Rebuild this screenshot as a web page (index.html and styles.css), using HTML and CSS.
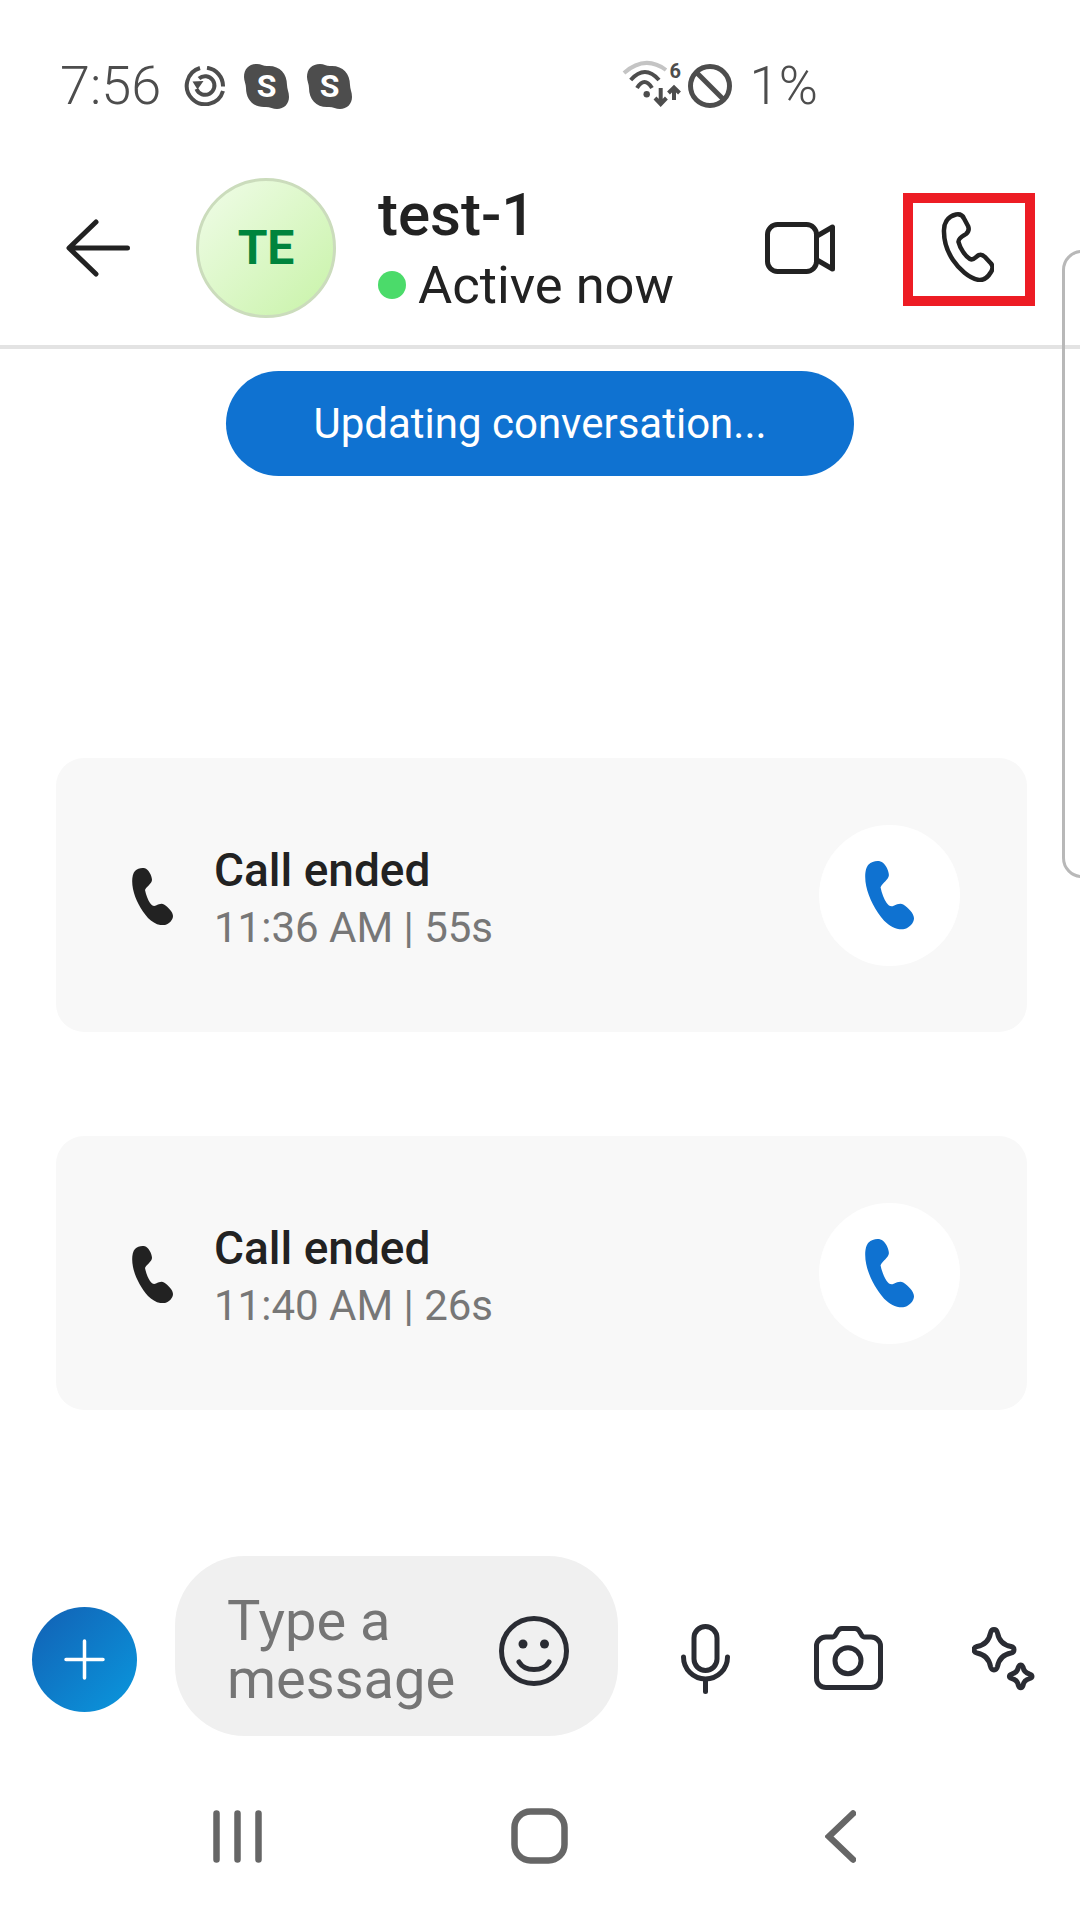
FILE: index.html
```html
<!DOCTYPE html>
<html lang="en">
<head>
<meta charset="utf-8">
<title>test-1</title>
<link rel="stylesheet" href="styles.css">
</head>
<body>
<div class="screen">
  <div class="status">
    <div class="status-group">
      <span class="time">7:56</span>
      <svg class="sync" viewBox="0 0 41 40" fill="none" stroke="#4d4d4d" stroke-width="4">
        <path d="M39 25 A18.500 18.500 0 1 1 16 2"/>
        <path d="M23 1.800 A18.500 18.500 0 0 1 39 20.500"/>
        <path d="M15 12.500 A9.300 9.300 0 1 1 12.500 23"/>
        <path d="M8.500 15.500 L19.500 15 L13.500 23.500 Z" fill="#4d4d4d" stroke="none"/>
      </svg>
      <span class="skype">
        <svg class="skype-blob" viewBox="0 0 45 45"><path d="M13 0 C17 0 19 2 23 2 C35 1 43 9 43 21 C43 25 45 28 45 33 C45 40 40 45 33 45 C29 45 26 43 22 43 C10 44 2 36 2 24 C2 20 0 17 0 13 C0 5 5 0 13 0 Z"/></svg>
        <span class="skype-s">S</span>
      </span>
      <span class="skype second">
        <svg class="skype-blob" viewBox="0 0 45 45"><path d="M13 0 C17 0 19 2 23 2 C35 1 43 9 43 21 C43 25 45 28 45 33 C45 40 40 45 33 45 C29 45 26 43 22 43 C10 44 2 36 2 24 C2 20 0 17 0 13 C0 5 5 0 13 0 Z"/></svg>
        <span class="skype-s">S</span>
      </span>
    </div>
    <div class="status-group right">
      <span class="wifi-wrap">
        <svg class="wifi" viewBox="0 0 58 44" fill="none" stroke="#4d4d4d" stroke-width="4">
          <path d="M1 9 Q22 -9.500 43 6" stroke="#c4c4c4"/>
          <path d="M7.700 16 Q22 0 36 16"/>
          <path d="M14 24 Q21.500 12 29 24"/>
          <circle cx="23.700" cy="30.300" r="3.200" fill="#4d4d4d" stroke="none"/>
          <path d="M37.700 24 V40 M32 34 L37.700 40 L43.400 34"/>
          <path d="M51 36 V24 M45.500 29 L51 23.500 L56.500 29"/>
        </svg>
        <span class="wifi-six">6</span>
      </span>
      <svg class="block" viewBox="0 0 44 44" fill="none" stroke="#4d4d4d" stroke-width="5">
        <circle cx="22" cy="22" r="19.500"/>
        <path d="M8.500 8.500 L35.500 35.500"/>
      </svg>
      <span class="battery">1%</span>
    </div>
  </div>

  <header class="header">
    <svg class="back" viewBox="0 0 64 58" fill="none" stroke="#222" stroke-width="5" stroke-linecap="round" stroke-linejoin="round">
      <path d="M61.500 29 H4 M30 3 L3 29 L30 55"/>
    </svg>
    <div class="avatar">TE</div>
    <div class="who">
      <div class="name">test-1</div>
      <div class="presence"><span class="dot"></span><span>Active now</span></div>
    </div>
    <svg class="video" viewBox="0 0 70 52" fill="none" stroke="#222" stroke-width="5" stroke-linejoin="round">
      <rect x="2.500" y="2.500" width="49" height="47" rx="10"/>
      <path d="M52 14 L67.500 5 V47 L52 38"/>
    </svg>
    <div class="call-box">
      <svg class="call-line" viewBox="0 0 53 70" fill="none" stroke="#222" stroke-width="4.500" stroke-linejoin="round">
        <path d="M3 20 C2.500 12 6 4.500 15 2.500 C19 1.800 21.500 3 23 6.500 L27 14 C28.500 17.500 28 19.500 25 22 C22 24 17 26 17.500 30 C19 36 24 44 29 47 C33 49 35 44 38 43 C40.500 42 42 43 44 45 L50 51.500 C52 54 52 57 50 60 C47 65 43 68.500 38 68 C28 66.500 18 57 12 48 C6 39 3 30 3 20 Z"/>
      </svg>
    </div>
  </header>

  <main class="thread">
    <div class="banner">Updating conversation...</div>
    <div class="card first">
      <svg class="phone-small" viewBox="0 0 41 57"><path d="M3 3 C6 0 12 -1 15 1.500 C18 4 20 9 20 12 C19.500 16 15 18 13 22 C14 27 16 32 18 35 C20 38 22 38.500 24 37.500 C27 36 30 35 32 36.500 C36 39 41 44 41 48 C41 52 37 56 33 57 C27 58 21 55 16 50 C9 42 3 31 1 21 C-0.500 14 0 6 3 3 Z"/></svg>
      <div class="call-text">
        <div class="call-title">Call ended</div>
        <div class="call-sub">11:36 AM | 55s</div>
      </div>
      <div class="call-btn">
        <svg class="phone-blue" viewBox="0 0 41 57"><path d="M3 3 C6 0 12 -1 15 1.500 C18 4 20 9 20 12 C19.500 16 15 18 13 22 C14 27 16 32 18 35 C20 38 22 38.500 24 37.500 C27 36 30 35 32 36.500 C36 39 41 44 41 48 C41 52 37 56 33 57 C27 58 21 55 16 50 C9 42 3 31 1 21 C-0.500 14 0 6 3 3 Z"/></svg>
      </div>
    </div>
    <div class="card">
      <svg class="phone-small" viewBox="0 0 41 57"><path d="M3 3 C6 0 12 -1 15 1.500 C18 4 20 9 20 12 C19.500 16 15 18 13 22 C14 27 16 32 18 35 C20 38 22 38.500 24 37.500 C27 36 30 35 32 36.500 C36 39 41 44 41 48 C41 52 37 56 33 57 C27 58 21 55 16 50 C9 42 3 31 1 21 C-0.500 14 0 6 3 3 Z"/></svg>
      <div class="call-text">
        <div class="call-title">Call ended</div>
        <div class="call-sub">11:40 AM | 26s</div>
      </div>
      <div class="call-btn">
        <svg class="phone-blue" viewBox="0 0 41 57"><path d="M3 3 C6 0 12 -1 15 1.500 C18 4 20 9 20 12 C19.500 16 15 18 13 22 C14 27 16 32 18 35 C20 38 22 38.500 24 37.500 C27 36 30 35 32 36.500 C36 39 41 44 41 48 C41 52 37 56 33 57 C27 58 21 55 16 50 C9 42 3 31 1 21 C-0.500 14 0 6 3 3 Z"/></svg>
      </div>
    </div>
  </main>

  <div class="composer">
    <div class="plus">
      <svg class="plus-icon" viewBox="0 0 41 41" fill="none" stroke="#fff" stroke-width="3.500" stroke-linecap="round"><path d="M20.500 2 V39 M2 20.500 H39"/></svg>
    </div>
    <div class="pill">
      <div class="placeholder">Type a message</div>
      <svg class="smiley" viewBox="0 0 70 70" fill="none" stroke="#2a2c33" stroke-width="5" stroke-linecap="round">
        <circle cx="35" cy="35" r="32.500"/>
        <circle cx="24" cy="28" r="4.500" fill="#2a2c33" stroke="none"/>
        <circle cx="45.500" cy="28" r="4.500" fill="#2a2c33" stroke="none"/>
        <path d="M20 46 C26 56 44 56 50 46"/>
      </svg>
    </div>
    <svg class="mic" viewBox="0 0 49 70" fill="none" stroke="#2a2c33" stroke-width="5" stroke-linecap="round">
      <rect x="13" y="2.500" width="23" height="44" rx="11.500"/>
      <path d="M2.500 33 A22 22 0 0 0 46.500 33 M24.500 55 V67.500"/>
    </svg>
    <svg class="camera" viewBox="0 0 69 64" fill="none" stroke="#2a2c33" stroke-width="5" stroke-linejoin="round">
      <path d="M12 11 H19 C20 11 21 10 22 8 L23.500 5.500 C24.500 3.500 26 2.500 28 2.500 H41 C43 2.500 44.500 3.500 45.500 5.500 L47 8 C48 10 49 11 50 11 H57 C62 11 66.500 15 66.500 20 V52 C66.500 58 62 61.500 57 61.500 H12 C7 61.500 2.500 58 2.500 52 V20 C2.500 15 7 11 12 11 Z"/>
      <circle cx="34" cy="34.700" r="13"/>
    </svg>
    <svg class="sparkle" viewBox="0 0 63 64" fill="none" stroke="#2a2c33" stroke-width="5" stroke-linejoin="round">
      <path d="M22 2.500 C24 2.500 25 4 25.500 6 C27 14 31 18 39 19.500 C41 20 42 21 42 22.700 C42 24.500 41 25.500 39 26 C31 27.500 27 31.500 25.500 39.500 C25 41.500 24 43 22 43 C20 43 19 41.500 18.500 39.500 C17 31.500 13 27.500 5 26 C3 25.500 2 24.500 2 22.700 C2 21 3 20 5 19.500 C13 18 17 14 18.500 6 C19 4 20 2.500 22 2.500 Z"/>
      <path d="M48.700 38 C50 38 50.500 39 51 40 C51.700 44 53.500 46 57.500 47 C59 47.500 60 48 60 49.300 C60 50.500 59 51.300 57.500 51.600 C53.500 52.500 51.700 54.500 51 58.500 C50.500 60 50 60.700 48.700 60.700 C47.400 60.700 46.900 60 46.400 58.500 C45.700 54.500 43.900 52.500 39.900 51.600 C38.400 51.300 37.400 50.500 37.400 49.300 C37.400 48 38.400 47.500 39.900 47 C43.900 46 45.700 44 46.400 40 C46.900 39 47.400 38 48.700 38 Z"/>
    </svg>
  </div>

  <nav class="nav">
    <svg class="nav-recents" viewBox="0 0 49 53" fill="none" stroke="#666" stroke-width="6.500" stroke-linecap="round"><path d="M3.500 3.500 V49.500 M24.500 3.500 V49.500 M45.500 3.500 V49.500"/></svg>
    <svg class="nav-home" viewBox="0 0 57 56" fill="none" stroke="#666" stroke-width="6.500"><rect x="3.500" y="3.500" width="50" height="49" rx="16"/></svg>
    <svg class="nav-back" viewBox="0 0 31 53" fill="none" stroke="#666" stroke-width="6.500" stroke-linecap="round" stroke-linejoin="miter"><path d="M28 3.500 L4 26.500 L28 49.500"/></svg>
  </nav>

  <div class="edge"></div>
</div>
</body>
</html>
```

FILE: styles.css
```css
* { box-sizing: border-box; }
html, body { margin: 0; padding: 0; background: #fff; }
body { font-family: Roboto, "Noto Sans", sans-serif; }
svg { display: block; flex: none; }

.screen {
  position: relative;
  width: 1080px;
  height: 1920px;
  overflow: hidden;
  background: #fff;
  display: flex;
  flex-direction: column;
}

/* status bar */
.status {
  height: 172px;
  padding: 0 262px 0 60px;
  display: flex;
  justify-content: space-between;
  align-items: center;
  color: #4d4d4d;
}
.status-group { display: flex; align-items: center; }
.time { font-size: 54px; font-weight: 350; line-height: 60px; margin-right: 23px; }
.sync { width: 41px; height: 40px; margin-right: 19px; }
.skype {
  position: relative;
  width: 45px;
  height: 45px;
  display: flex;
  align-items: center;
  justify-content: center;
  margin-right: 18px;
}
.skype.second { margin-right: 0; }
.skype-blob { position: absolute; left: 0; top: 0; width: 45px; height: 45px; fill: #4d4d4d; }
.skype-s { position: relative; color: #fff; font-size: 32px; font-weight: 700; line-height: 1; }
.wifi-wrap { position: relative; display: block; width: 58px; height: 44px; margin-right: 7px; }
.wifi { width: 58px; height: 44px; overflow: visible; }
.wifi-six {
  position: absolute;
  left: 46px;
  top: -3px;
  font-size: 20px;
  font-weight: 700;
  line-height: 20px;
  color: #4d4d4d;
}
.block { width: 44px; height: 44px; margin-right: 17px; }
.battery { font-size: 53px; font-weight: 350; line-height: 60px; }

/* header */
.header {
  height: 177px;
  padding: 0 0 22px 66px;
  display: flex;
  align-items: center;
  border-bottom: 4px solid #e3e3e3;
}
.back { width: 64px; height: 58px; margin-right: 66px; }
.avatar {
  width: 140px;
  height: 140px;
  border-radius: 50%;
  border: 3px solid #cbdcbc;
  background: linear-gradient(135deg, #f0fce8, #c8f3a8);
  color: #00843d;
  font-size: 48px;
  font-weight: 700;
  display: flex;
  align-items: center;
  justify-content: center;
  margin-right: 42px;
}
.who { width: 387px; }
.name { font-size: 60px; font-weight: 500; line-height: 68px; color: #222; }
.presence {
  display: flex;
  align-items: center;
  font-size: 52.500px;
  line-height: 58px;
  color: #222;
  margin-top: 7px;
}
.dot { width: 28px; height: 28px; border-radius: 50%; background: #4bdb6a; margin-right: 12px; }
.video { width: 70px; height: 52px; }
.call-box {
  width: 132px;
  height: 113px;
  border: 10px solid #ed1c24;
  margin: 4px 0 0 68px;
  padding: 9px 0 0 28px;
}
.call-line { width: 53px; height: 70px; }

/* thread */
.thread { padding: 22px 53px 0 56px; }
.banner {
  width: 628px;
  height: 105px;
  margin: 0 0 0 170px;
  border-radius: 53px;
  background: #0f72d1;
  color: #fff;
  font-size: 42px;
  display: flex;
  align-items: center;
  justify-content: center;
}
.card {
  height: 274px;
  margin-top: 104px;
  background: #f8f8f8;
  border-radius: 28px;
  display: flex;
  align-items: center;
  padding: 0 67px 0 76px;
}
.card.first { margin-top: 282px; }
.phone-small { width: 41px; height: 57px; fill: #222; margin-right: 41px; margin-top: 3px; }
.call-text { flex: 1; margin-top: 8px; }
.call-title { font-size: 46px; font-weight: 500; line-height: 56px; color: #222; }
.call-sub { font-size: 42px; line-height: 56px; color: #777; margin-top: 2px; }
.call-btn {
  width: 141px;
  height: 141px;
  border-radius: 50%;
  background: #fff;
  display: flex;
  align-items: center;
  justify-content: center;
}
.phone-blue { width: 49px; height: 70px; fill: #0f72d1; }

/* composer */
.composer {
  margin-top: 146px;
  padding: 0 0 0 32px;
  height: 180px;
  display: flex;
  align-items: flex-end;
}
.plus {
  width: 105px;
  height: 105px;
  border-radius: 50%;
  background: linear-gradient(135deg, #1260b4, #0a98de);
  display: flex;
  align-items: center;
  justify-content: center;
  margin: 0 38px 24px 0;
}
.plus-icon { width: 41px; height: 41px; }
.pill {
  width: 443px;
  height: 180px;
  border-radius: 70px;
  background: #f0f0f0;
  padding: 0 49px 0 52px;
  display: flex;
  align-items: center;
  justify-content: space-between;
  margin-right: 63px;
}
.placeholder { width: 240px; font-size: 56px; line-height: 58px; color: #757575; margin-top: 8px; }
.smiley { width: 70px; height: 70px; margin-top: 10px; }
.mic { width: 49px; height: 70px; margin: 0 84px 42px 0; }
.camera { width: 69px; height: 64px; margin: 0 89px 46px 0; }
.sparkle { width: 63px; height: 64px; margin-bottom: 45px; }

/* nav */
.nav {
  padding: 72px 0 0 213px;
  display: flex;
  align-items: center;
}
.nav-recents { width: 49px; height: 53px; margin-right: 249px; }
.nav-home { width: 57px; height: 56px; margin-right: 257px; }
.nav-back { width: 31px; height: 53px; }

/* panel edge peeking from the right */
.edge {
  position: absolute;
  left: 1062px;
  top: 250px;
  width: 60px;
  height: 628px;
  border: 3px solid #b8b8b8;
  border-radius: 20px;
}
```
